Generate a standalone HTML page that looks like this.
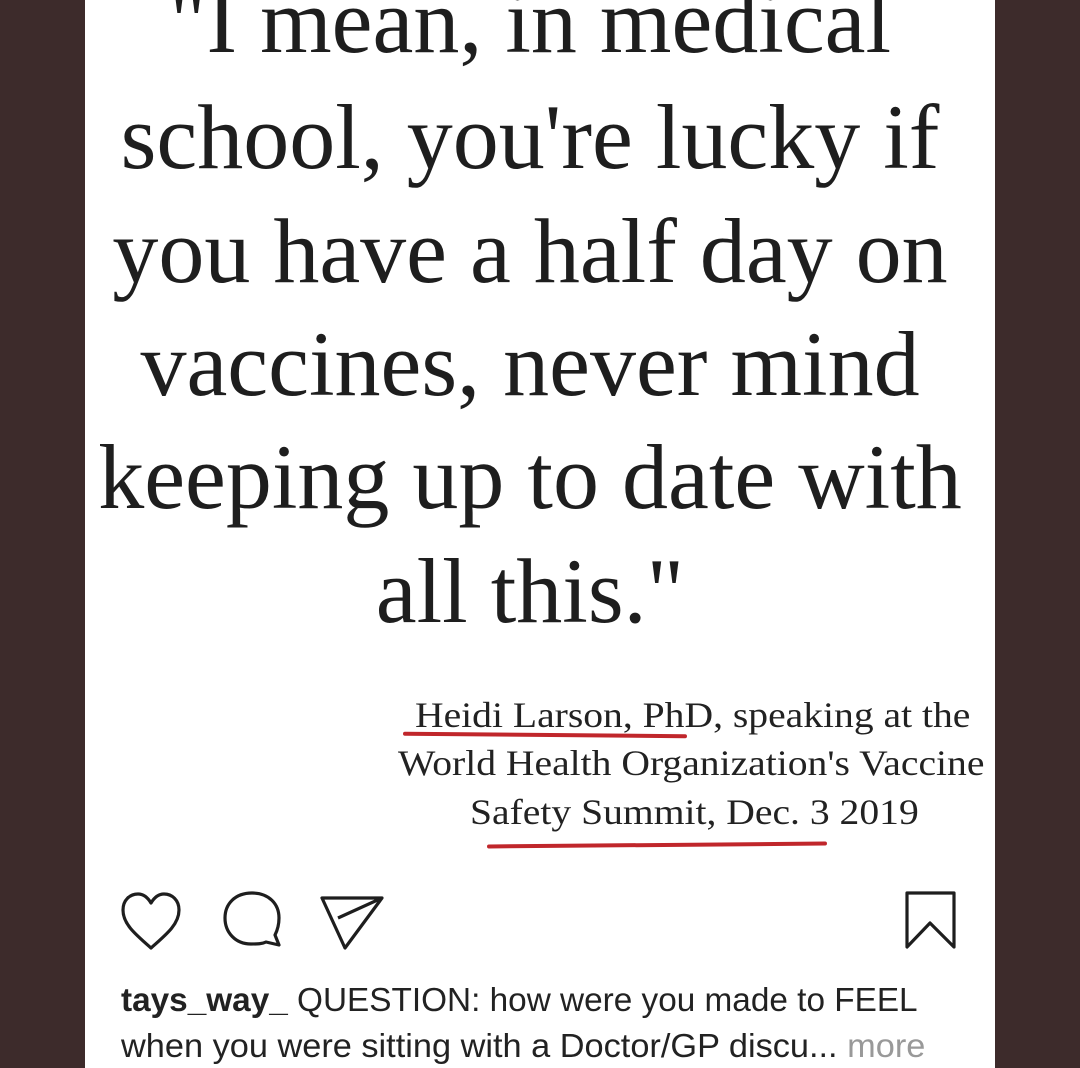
<!DOCTYPE html>
<html><head><style>
html,body{margin:0;padding:0;width:1080px;height:1068px;overflow:hidden;background:#3d2b2b}
#p{position:absolute;left:85px;top:0;width:910px;height:1068px;background:#fff}
.q{position:absolute;left:-10px;width:910px;text-align:center;font-family:"Liberation Serif",serif;font-size:92px;color:#1e1e1e;white-space:nowrap;line-height:1}
.a{position:absolute;font-family:"Liberation Serif",serif;font-size:36px;color:#222;white-space:nowrap;line-height:1;transform:scaleX(1.1);transform-origin:0 0}
.c{position:absolute;left:36px;font-family:"Liberation Sans",sans-serif;font-size:33px;color:#222;white-space:nowrap;line-height:1;transform-origin:0 0}
.r{position:absolute;height:4px;background:#c0262b;border-radius:3px}
</style></head><body>
<div id="p">
<div class="q" style="top:-25px">"I mean, in medical</div>
<div class="q" style="top:91px">school, you're lucky if</div>
<div class="q" style="top:205px">you have a half day on</div>
<div class="q" style="top:318px">vaccines, never mind</div>
<div class="q" style="top:431px">keeping up to date with</div>
<div class="q" style="top:545px">all this."</div>
<div class="a" style="left:330px;top:697px">Heidi Larson, PhD, speaking at the</div>
<div class="a" style="left:313px;top:745px">World Health Organization's Vaccine</div>
<div class="a" style="left:385px;top:794px">Safety Summit, Dec. 3 2019</div>
<div class="r" style="left:318px;top:733px;width:284px;transform:rotate(0.5deg)"></div>
<div class="r" style="left:402px;top:843px;width:340px;transform:rotate(-0.5deg)"></div>
<svg style="position:absolute;left:0;top:880px" width="910" height="80" viewBox="0 0 910 80" fill="none" stroke="#1e1e1e" stroke-width="3.2" stroke-linejoin="round">
<path d="M66 68 C50 54 38 44 38 30 C38 20 45 14 53 14 C59 14 63 18 66 23 C69 18 73 14 79 14 C87 14 94 20 94 30 C94 44 82 54 66 68Z"/>
<path d="M166 64 C150 64 140 52 140 38 C140 24 150 13 167 13 C184 13 194 24 194 38 C194 47 191 53 190 55 L194 65 L181 62 C177 64 172 64 166 64Z"/>
<path d="M237 18 L297 18 L260 68 Z M297 18 L253 38"/>
<path d="M822 13 L869 13 L869 67 L845 43 L822 67 Z"/>
</svg>
<div class="c" style="top:983px;transform:scaleX(1.01)"><b>tays_way_</b> QUESTION: how were you made to FEEL</div>
<div class="c" style="top:1029px;transform:scaleX(1.04)">when you were sitting with a Doctor/GP discu... <span style="color:#999">more</span></div>
</div>
</body></html>
